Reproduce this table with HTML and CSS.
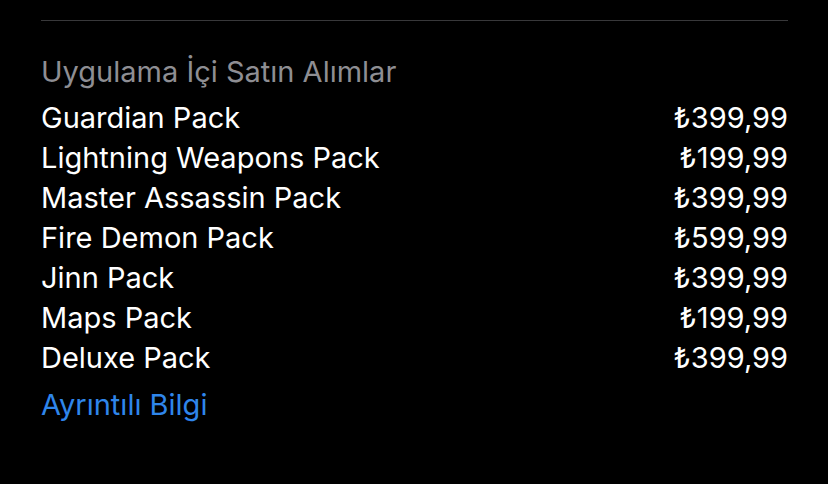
FILE: index.html
```html
<!DOCTYPE html>
<html lang="tr">
<head>
<meta charset="utf-8">
<link rel="stylesheet" href="styles.css">
</head>
<body>
<div class="section">
  <hr class="divider">
  <h2 class="title">Uygulama İçi Satın Alımlar</h2>
  <ul class="list">
    <li class="row"><span>Guardian Pack</span><span>₺399,99</span></li>
    <li class="row"><span>Lightning Weapons Pack</span><span>₺199,99</span></li>
    <li class="row"><span>Master Assassin Pack</span><span>₺399,99</span></li>
    <li class="row"><span>Fire Demon Pack</span><span>₺599,99</span></li>
    <li class="row"><span>Jinn Pack</span><span>₺399,99</span></li>
    <li class="row"><span>Maps Pack</span><span>₺199,99</span></li>
    <li class="row"><span>Deluxe Pack</span><span>₺399,99</span></li>
  </ul>
  <a class="more" href="#">Ayrıntılı Bilgi</a>
</div>
</body>
</html>
```
FILE: styles.css
```css
html, body {
  margin: 0;
  background: #000;
}
body {
  font-family: Inter, "Noto Sans", sans-serif;
  color: #fff;
  width: 828px;
  height: 484px;
  overflow: hidden;
}
.section {
  padding: 20px 40px 0 41px;
}
.divider {
  margin: 0;
  border: 0;
  height: 1px;
  background: #38383a;
}
.title {
  margin: 31px 0 0;
  font-weight: 400;
  font-size: 29px;
  line-height: 40px;
  color: #8e8e93;
}
.list {
  list-style: none;
  margin: 6px 0 0;
  padding: 0;
}
.row {
  display: flex;
  justify-content: space-between;
  font-size: 29px;
  line-height: 40px;
}
.more {
  display: block;
  margin-top: 7px;
  font-size: 29px;
  line-height: 40px;
  color: #2f86eb;
  text-decoration: none;
}
```
